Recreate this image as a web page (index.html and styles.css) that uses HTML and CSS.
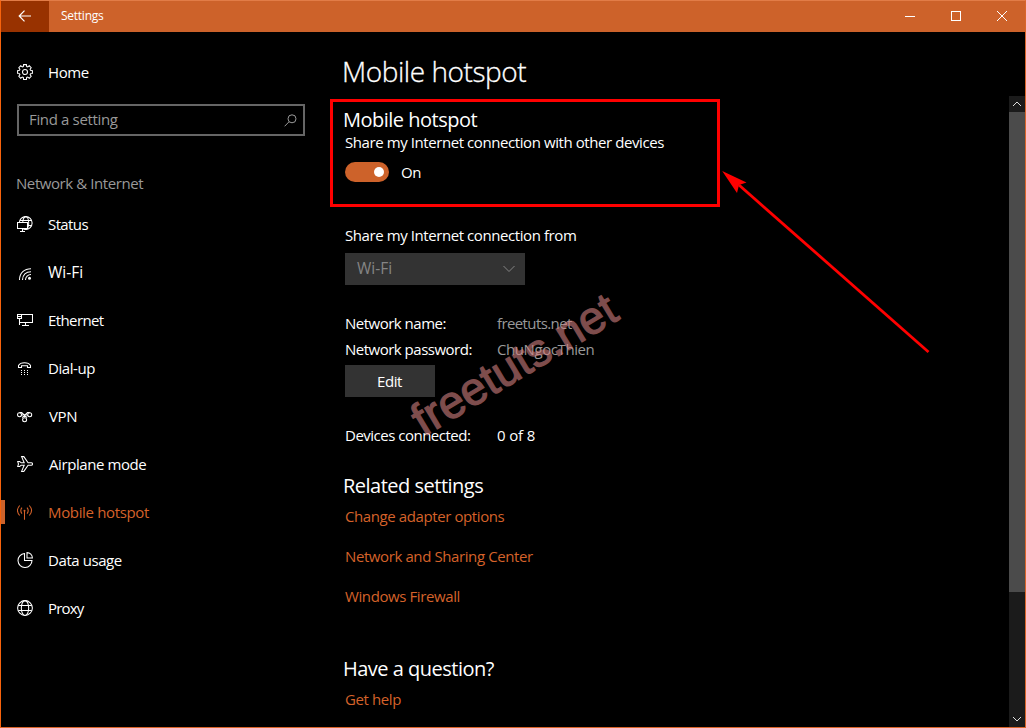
FILE: index.html
```html
<!DOCTYPE html>
<html lang="en">
<head>
<meta charset="utf-8">
<title>Settings</title>
<link rel="stylesheet" href="styles.css">
</head>
<body>
<div class="window">
  <header class="titlebar">
    <button class="back" aria-label="Back"><svg width="14" height="12" viewBox="0 0 14 12"><path d="M6.500 .7 1.200 6l5.300 5.300M1.200 6H13"/></svg></button>
    <span class="caption">Settings</span>
    <div class="controls">
      <svg width="46" height="31" viewBox="0 0 46 31"><path d="M18 15.500h10" shape-rendering="crispEdges"/></svg>
      <svg width="46" height="31" viewBox="0 0 46 31"><path d="M18.500 10.500h9v9h-9z" shape-rendering="crispEdges"/></svg>
      <svg width="46" height="31" viewBox="0 0 46 31"><path d="M18 10l10 10M28 10l-10 10"/></svg>
    </div>
  </header>
  <div class="body">
    <nav class="sidebar">
      <a class="home"><svg class="icon" viewBox="0 0 16 16"><path d="M6.600 .6h2.800l.3 1.900 1 .4 1.600-1.100 1.900 1.900-1.100 1.600.4 1 1.900.3v2.800l-1.900.3-.4 1 1.100 1.600-1.900 1.900-1.600-1.100-1 .4-.3 1.900H6.600l-.3-1.900-1-.4-1.600 1.100-1.900-1.900 1.100-1.600-.4-1-1.900-.3V6.600l1.900-.3.4-1-1.100-1.600 1.900-1.900 1.600 1.100 1-.4z"/><circle cx="8" cy="8" r="2.500"/></svg><span>Home</span></a>
      <div class="search"><span>Find a setting</span><svg width="13" height="13" viewBox="0 0 13 13"><circle cx="8" cy="4.800" r="4"/><path d="M5 7.800.6 12.300"/></svg></div>
      <h2 class="group">Network &amp; Internet</h2>
      <a class="item tight"><svg class="icon" viewBox="0 0 16 16"><circle cx="8.700" cy="7" r="6.400"/><ellipse cx="8.700" cy="7" rx="3" ry="6.400"/><path d="M3 4.500h11.400M9 9.500h5.500"/><path class="screen" d="M.5 6.500h10v6h-10z"/><path d="M5.500 12.500v3M3 15.500h5"/></svg><span>Status</span></a>
      <a class="item wifi"><svg class="icon" viewBox="0 0 16 16"><path d="M2.500 16C2.500 9 7.500 4.700 14 4.700M5.500 16C5.500 11 9 7.700 14 7.700M8.500 16c0-3 2.500-5.500 5.500-5.500"/><circle class="solid" cx="12.500" cy="14.300" r="1.500"/></svg><span>Wi-Fi</span></a>
      <a class="item tight"><svg class="icon" viewBox="0 0 16 16"><path d="M5 2.500h10.500v8H3M.5 2.500h4v4h-4zM2.500 6.500v6.500M8.500 10.500v3M5 13.500h7M1 4.500h3"/></svg><span>Ethernet</span></a>
      <a class="item"><svg class="icon" viewBox="0 0 16 16"><path d="M1.500 7.500V5.500C3.500 1.800 11.500 1.800 13.500 5.500v2h-3V5.700h-6v1.800z"/><path class="dots" d="M4 10.500h1M7 10.500h1M10 10.500h1M4 12.500h1M7 12.500h1M10 12.500h1M4 14.500h1M7 14.500h1M10 14.500h1"/></svg><span>Dial-up</span></a>
      <a class="item airy"><svg class="icon" viewBox="0 0 16 16"><circle cx="2.500" cy="6.700" r="2"/><circle cx="12.700" cy="6.700" r="2"/><circle cx="7.600" cy="11.800" r="2"/><path d="M2.500 4.600h2.200l5.300 5M12.700 4.600h-2.200l-5.300 5M4.500 7.600l1.600-1M10.700 7.600l-1.600-1"/></svg><span>VPN</span></a>
      <a class="item airy"><svg class="icon" viewBox="0 0 16 16"><path d="M.7 5.500h2l1.500 1.300h3L4.600.6h2.200l4.300 6.200h3.200c1.600 0 1.600 2.400 0 2.400h-3.200l-4.300 6.200H4.600l2.600-6.200h-3l-1.500 1.300h-2l.8-2.500z"/></svg><span>Airplane mode</span></a>
      <a class="item active"><svg class="icon" viewBox="0 0 16 16"><path d="M2.700 1.500c-2.700 3-2.700 7 0 10M5 3.700c-1.600 2-1.600 4 0 6M10 3.700c1.600 2 1.600 4 0 6M12.300 1.500c2.700 3 2.700 7 0 10M7.500 6.700V15.700"/><circle class="solid" cx="7.500" cy="6.700" r="1"/></svg><span>Mobile hotspot</span></a>
      <a class="item"><svg class="icon" viewBox="0 0 16 16"><path d="M7.500 1.500a7 7 0 1 0 7.500 7H7.500z"/><path d="M10 .6v5.400h5.400C15.400 3 13 .6 10 .6z"/></svg><span>Data usage</span></a>
      <a class="item tighter"><svg class="icon" viewBox="0 0 16 16"><circle cx="8" cy="8" r="7.400"/><ellipse cx="8" cy="8" rx="3.700" ry="7.400"/><path d="M1.300 5.500h13.400M1.300 10.500h13.400"/></svg><span>Proxy</span></a>
    </nav>
    <main class="content">
      <h1 class="title">Mobile hotspot</h1>
      <section class="callout">
        <h2 class="sub">Mobile hotspot</h2>
        <p class="line">Share my Internet connection with other devices</p>
        <div class="toggle-row"><span class="toggle"></span><span>On</span></div>
      </section>
      <section class="panel">
        <p class="from">Share my Internet connection from</p>
        <div class="select"><span class="wide">Wi-Fi</span><svg width="12" height="8" viewBox="0 0 12 8"><path d="M.5 1 6 6.500 11.500 1"/></svg></div>
        <dl class="facts">
          <dt>Network name:</dt><dd class="dim tight">freetuts.net</dd>
          <dt>Network password:</dt><dd class="dim">ChuNgocThien</dd>
        </dl>
        <button class="edit">Edit</button>
        <dl class="facts devices"><dt>Devices connected:</dt><dd class="count">0 of 8</dd></dl>
        <h2 class="sub">Related settings</h2>
        <a class="link">Change adapter options</a>
        <a class="link">Network and Sharing Center</a>
        <a class="link">Windows Firewall</a>
        <h2 class="sub question">Have a question?</h2>
        <a class="link">Get help</a>
      </section>
    </main>
    <div class="scrollbar">
      <svg width="16" height="16" viewBox="0 0 16 16"><path d="M4 10l4-4 4 4"/></svg>
      <div class="thumb"></div>
      <svg class="down" width="16" height="16" viewBox="0 0 16 16"><path d="M4 6l4 4 4-4"/></svg>
    </div>
  </div>
  <svg class="arrow" width="210" height="186" viewBox="0 0 210 186"><path class="shaft" d="M17 14 206.500 181"/><path class="head" d="M.2 0 24.500 11.500 17 14 15 22z"/></svg>
  <div class="watermark">freetuts.net</div>
</div>
</body>
</html>
```
FILE: styles.css
```css
* { box-sizing: border-box; margin: 0; padding: 0; }
body { background: #000; color: #fff; font: 15px/20px "Open Sans", "Noto Sans", sans-serif; letter-spacing: -.42px; overflow: hidden; }
button { border: 0; color: inherit; font: inherit; letter-spacing: inherit; }
svg { fill: none; stroke: currentColor; stroke-width: 1; flex: none; }
.window { position: relative; width: 1026px; height: 728px; border: 1px solid #d9652a; border-top-color: #e27c47; border-left-color: #f7630c; display: flex; flex-direction: column; }
.titlebar { height: 31px; background: #cd622a; display: flex; align-items: center; }
.back { width: 48px; height: 31px; background: #983200; display: grid; place-items: center; padding-bottom: 2px; }
.back svg { stroke-width: 1.200; }
.caption { font-size: 12px; letter-spacing: -.25px; padding: 0 0 1px 12px; flex: 1; }
.controls { display: flex; }
.body { flex: 1; display: flex; min-height: 0; }
.sidebar { width: 329px; padding-top: 16px; }
.home, .item { display: flex; align-items: center; height: 48px; padding-left: 16px; gap: 15px; }
.icon { width: 16px; height: 16px; stroke-width: 1.050; }
.solid { fill: currentColor; stroke: none; }
.screen { fill: #000; }
.tight { letter-spacing: -.6px; }
.tighter { letter-spacing: -.8px; }
.wide, .wifi { letter-spacing: 0; }
.wide, .wifi span { font-size: 15.500px; }
.airy { gap: 16px; }
.search { width: 288px; height: 32px; margin: 8px 0 0 16px; border: 2px solid #666; padding: 0 6px 0 10px; color: #999; display: flex; align-items: center; justify-content: space-between; }
.search span { padding-bottom: 2px; letter-spacing: -.35px; }
.group { font-size: 15px; font-weight: 400; color: #999; line-height: 20px; padding-left: 15px; margin: 37px 0 7px; }
.active { color: #d5622a; position: relative; letter-spacing: -.35px; }
.active::before { content: ""; position: absolute; left: 0; top: 12px; width: 4px; height: 24px; background: #cd622a; }
.content { flex: 1; padding-top: 19px; }
.title { font-size: 28px; font-weight: 300; line-height: 40px; letter-spacing: -.45px; padding-left: 12px; -webkit-text-stroke: .3px #fff; }
.callout { width: 390px; height: 108px; margin-top: 8px; border: 3px solid #f00; padding: 5px 0 0 12px; }
.sub { font-size: 20px; font-weight: 400; line-height: 26px; letter-spacing: -.5px; margin-left: -2px; }
.callout .line { margin-top: -1px; }
.toggle-row { display: flex; align-items: center; gap: 12px; margin-top: 10px; }
.toggle { width: 44px; height: 20px; border-radius: 10px; background: #cd622a; padding: 5px; display: flex; justify-content: flex-end; }
.toggle::after { content: ""; width: 10px; height: 10px; border-radius: 50%; background: #fff; }
.panel { padding: 18px 0 0 15px; }
.select { width: 180px; height: 32px; margin-top: 8px; background: #333; color: #858585; display: flex; align-items: center; justify-content: space-between; padding: 0 10px 0 12px; }
.select span { padding-bottom: 2px; }
.facts { display: grid; grid-template-columns: 152px auto; grid-auto-rows: 26px; align-items: center; margin-top: 25px; }
.facts dt { letter-spacing: -.5px; }
.dim { color: #999; }
.count { letter-spacing: -.15px; }
.edit { display: block; width: 90px; height: 32px; background: #333; margin-top: 3px; padding-right: 1px; }
.facts.devices { margin-top: 25px; }
.panel .sub { margin-top: 25px; }
.link { display: block; color: #d5622a; line-height: 20px; letter-spacing: -.4px; margin: 7px 0 20px; }
.link + .link { margin-top: 0; }
.panel .question { margin-top: 50px; }
.scrollbar { width: 16px; margin-top: 64px; background: #1b1b1b; display: flex; flex-direction: column; color: #ddd; }
.thumb { height: 480px; background: #4b4b4b; }
.down { margin-top: auto; }
.arrow { position: absolute; left: 721px; top: 170px; color: #f00; }
.shaft { stroke-width: 2.800; }
.head { fill: #f00; stroke: none; }
.watermark { position: absolute; left: 513px; top: 363px; font: 46px/54px "Liberation Sans", sans-serif; letter-spacing: 0; color: #d38080; opacity: .6; -webkit-text-stroke: 1.200px #d38080; transform: translate(-50%, -50%) rotate(-31deg); }
```
